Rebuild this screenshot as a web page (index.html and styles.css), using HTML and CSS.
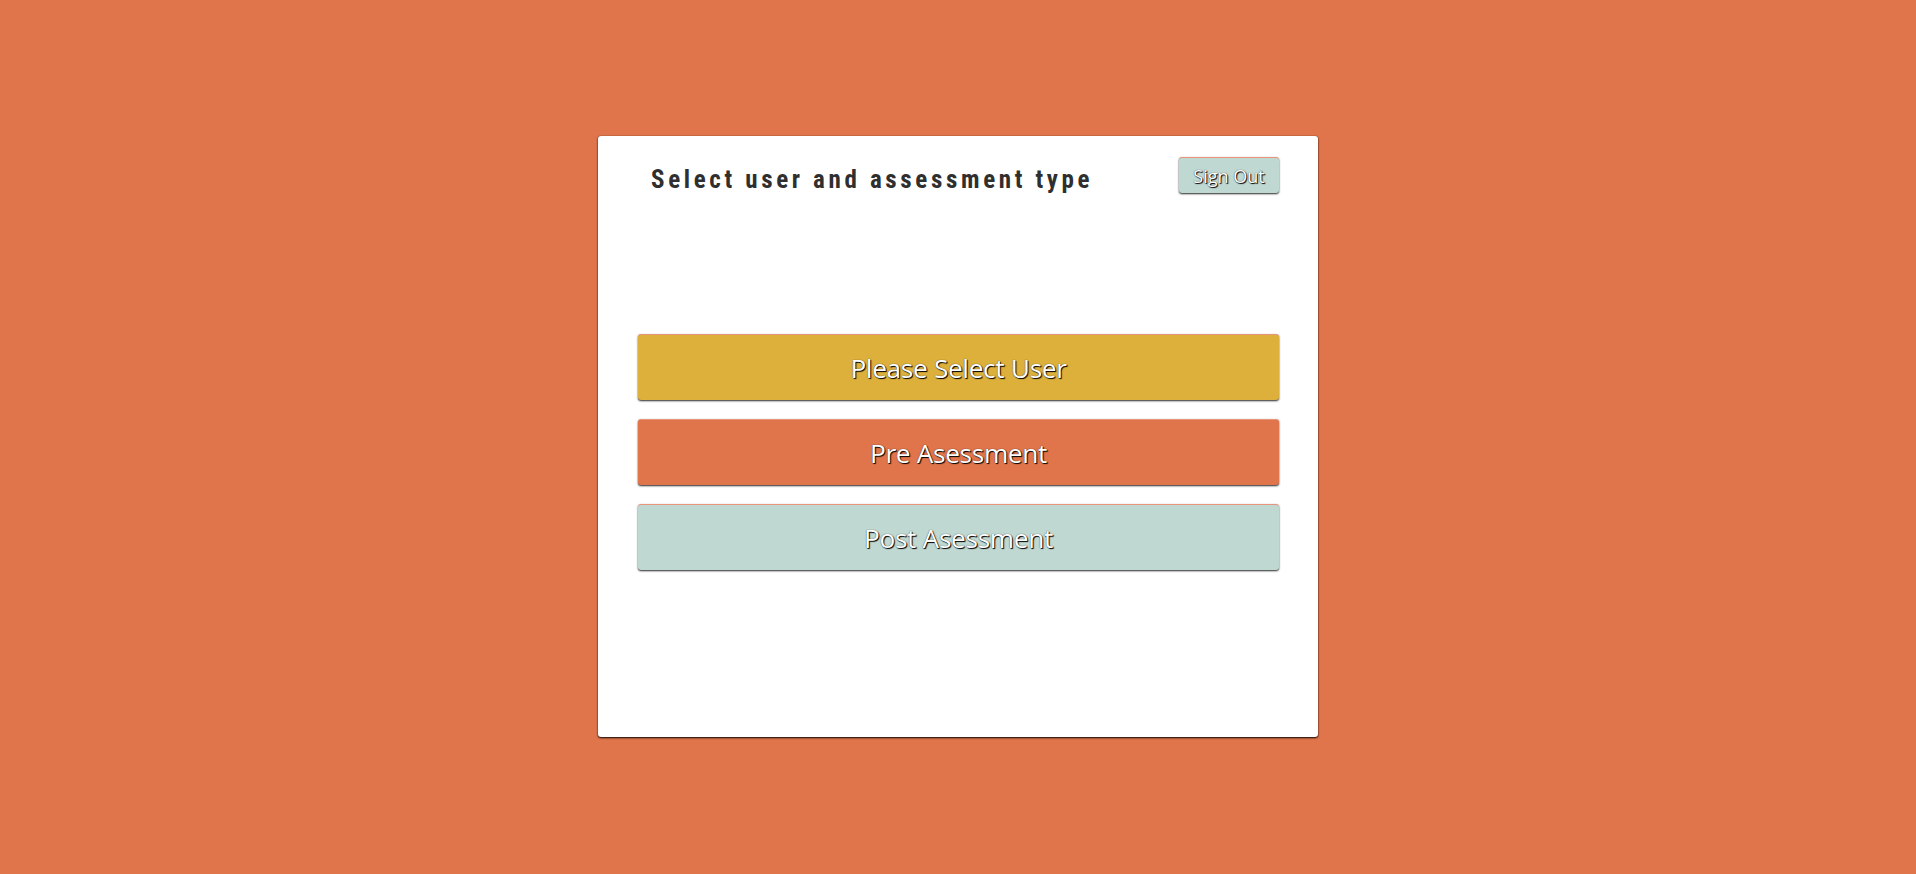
FILE: index.html
```html
<!DOCTYPE html>
<html lang="en">
<head>
<meta charset="utf-8">
<title>Select user and assessment type</title>
<link rel="stylesheet" href="styles.css">
</head>
<body>
<main class="card">
  <header class="card-header">
    <h1 class="title">Select user and assessment type</h1>
    <button class="btn btn-teal btn-small">Sign Out</button>
  </header>
  <div class="actions">
    <button class="btn btn-yellow btn-large">Please Select User</button>
    <button class="btn btn-orange btn-large">Pre Asessment</button>
    <button class="btn btn-teal btn-large">Post Asessment</button>
  </div>
</main>
</body>
</html>
```
FILE: styles.css
```css
html, body {
  margin: 0;
  padding: 0;
}
body {
  background: #e0744a;
  height: 874px;
  overflow: hidden;
  font-family: "Open Sans", "Liberation Sans", sans-serif;
}
.card {
  box-sizing: border-box;
  width: 720px;
  height: 601px;
  margin: 136px auto 0;
  background: #ffffff;
  border-radius: 3px;
  box-shadow: 0 1px 2px rgba(0, 0, 0, 0.95), 0 0 1px rgba(0, 0, 0, 0.6);
  padding: 21px 39px 0 40px;
}
.card-header {
  display: flex;
  justify-content: space-between;
  align-items: flex-start;
  height: 36px;
}
.title {
  margin: 0;
  padding: 5px 0 0 13px;
  font-family: "Roboto Condensed", Roboto, "Liberation Sans", sans-serif;
  font-weight: 700;
  font-size: 25px;
  line-height: 36px;
  letter-spacing: 3.65px;
  color: #2f2f2f;
}
.btn {
  display: flex;
  align-items: center;
  justify-content: center;
  box-sizing: border-box;
  border: 0;
  border-top: 1px solid #e9957c;
  border-radius: 3px;
  color: #ffffff;
  font-family: "Open Sans", "Liberation Sans", sans-serif;
  text-shadow: 1px 1px 1px #000000, 0 0 1px rgba(0, 0, 0, 0.8);
  box-shadow: 0 1px 2px rgba(0, 0, 0, 0.85);
  padding: 0;
  cursor: pointer;
}
.btn-small {
  width: 100px;
  height: 36px;
  font-size: 18px;
  letter-spacing: 0;
}
.btn-large {
  width: 641px;
  height: 66px;
  font-size: 26.2px;
  letter-spacing: -0.3px;
}
.btn-yellow { background: #dcb03a; }
.btn-orange { background: #e0744a; }
.btn-teal { background: #bfd8d2; }
.actions {
  display: flex;
  flex-direction: column;
  gap: 19px;
  margin-top: 141px;
}
```
